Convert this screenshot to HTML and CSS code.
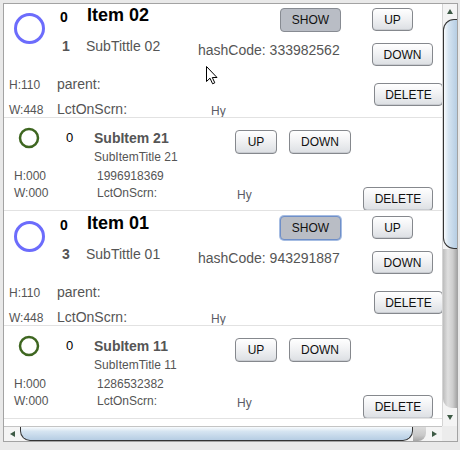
FILE: index.html
```html
<!DOCTYPE html>
<html>
<head>
<meta charset="utf-8">
<link rel="stylesheet" href="styles.css">
</head>
<body>
<div class="pane">
  <div class="viewport">
    <div class="list">
      <div class="item">
        <div class="item-top">
          <div class="ring-lg"></div>
          <div class="nums"><div class="n-top">0</div><div class="n-bot">1</div></div>
          <div class="titles"><div class="title">Item 02</div><div class="subtitle">SubTittle 02</div></div>
          <div class="hash">hashCode: 333982562</div>
          <div class="show-col"><button class="btn show">SHOW</button></div>
          <div class="nav-col"><button class="btn up">UP</button><button class="btn down">DOWN</button></div>
        </div>
        <div class="item-bottom">
          <div class="lbl r1">H:110</div><div class="info r1">parent:</div>
          <div class="lbl r2">W:448</div><div class="info r2">LctOnScrn:</div><div class="hy">Hy</div>
          <button class="btn del">DELETE</button>
        </div>
      </div>
      <div class="sub">
        <svg class="ring-sm" width="22" height="22" viewBox="0 0 22 22"><circle cx="11" cy="11" r="9" fill="none" stroke="#3e6620" stroke-width="2.5"/></svg>
        <div class="s-num">0</div>
        <div class="s-titles"><div class="s-title">SubItem 21</div><div class="s-subtitle">SubItemTitle 21</div></div>
        <button class="btn s-up">UP</button>
        <button class="btn s-down">DOWN</button>
        <div class="s-lbls"><div>H:000</div><div>W:000</div></div>
        <div class="s-info"><div>1996918369</div><div>LctOnScrn:</div></div>
        <div class="s-hy">Hy</div>
        <button class="btn s-del">DELETE</button>
      </div>
      <div class="item">
        <div class="item-top">
          <div class="ring-lg"></div>
          <div class="nums"><div class="n-top">0</div><div class="n-bot">3</div></div>
          <div class="titles"><div class="title">Item 01</div><div class="subtitle">SubTittle 01</div></div>
          <div class="hash">hashCode: 943291887</div>
          <div class="show-col"><button class="btn show focus">SHOW</button></div>
          <div class="nav-col"><button class="btn up">UP</button><button class="btn down">DOWN</button></div>
        </div>
        <div class="item-bottom">
          <div class="lbl r1">H:110</div><div class="info r1">parent:</div>
          <div class="lbl r2">W:448</div><div class="info r2">LctOnScrn:</div><div class="hy">Hy</div>
          <button class="btn del">DELETE</button>
        </div>
      </div>
      <div class="sub">
        <svg class="ring-sm" width="22" height="22" viewBox="0 0 22 22"><circle cx="11" cy="11" r="9" fill="none" stroke="#3e6620" stroke-width="2.5"/></svg>
        <div class="s-num">0</div>
        <div class="s-titles"><div class="s-title">SubItem 11</div><div class="s-subtitle">SubItemTitle 11</div></div>
        <button class="btn s-up">UP</button>
        <button class="btn s-down">DOWN</button>
        <div class="s-lbls"><div>H:000</div><div>W:000</div></div>
        <div class="s-info"><div>1286532382</div><div>LctOnScrn:</div></div>
        <div class="s-hy">Hy</div>
        <button class="btn s-del">DELETE</button>
      </div>
    </div>
  </div>
  <div class="vbar">
    <div class="arr arr-v"><span class="tri-up"></span></div>
    <div class="vthumb"></div>
    <div class="vtrack"></div>
    <div class="arr arr-vd"><span class="tri-down"></span></div>
  </div>
  <div class="hbar">
    <div class="arr arr-h"><span class="tri-left"></span></div>
    <div class="hthumb"></div>
    <div class="htrack"></div>
    <div class="arr arr-h"><span class="tri-right"></span></div>
  </div>
  <div class="corner"></div>
</div>
<svg class="cursor" width="13" height="19" viewBox="0 0 13 19"><path d="M0.5 0.5 L0.5 15.5 L4 12.2 L6.6 17.8 L8.8 16.8 L6.3 11.5 L11 11.5 Z" fill="#fff" stroke="#000" stroke-width="1" stroke-linejoin="miter"/></svg>
</body>
</html>
```
FILE: styles.css
```css
html, body {
  margin: 0;
  padding: 0;
  background: #e9e9e9;
  font-family: "Liberation Sans", Arial, sans-serif;
}
body {
  width: 460px;
  height: 450px;
  position: relative;
  overflow: hidden;
}
.pane {
  margin: 3px 0 0 3px;
  width: 455px;
  height: 439px;
  box-sizing: border-box;
  border: 1px solid #a3a3a3;
  display: grid;
  grid-template-columns: 438px 15px;
  grid-template-rows: 422px 15px;
}
.viewport {
  overflow: hidden;
  background: #fff;
}
.list {
  margin-top: -1px;
  width: 438px;
}

/* main item */
.item {
  height: 114px;
  border-bottom: 1px solid #e2e2e2;
  overflow: hidden;
  display: flex;
  flex-direction: column;
}
.item-top {
  height: 70px;
  display: flex;
}
.ring-lg {
  box-sizing: border-box;
  margin: 10px 0 0 10px;
  width: 31px;
  height: 31px;
  border: 3px solid #6c6cfc;
  border-radius: 50%;
}
.nums {
  margin-left: 15px;
  width: 26px;
  font-weight: bold;
  font-size: 14px;
  line-height: 16px;
}
.n-top { margin-top: 5.5px; color: #000; }
.n-bot { margin-top: 13px; padding-left: 2px; color: #555; }
.titles {
  width: 112px;
}
.title {
  margin-top: 2px;
  padding-left: 1px;
  font-weight: bold;
  font-size: 18px;
  line-height: 20px;
  color: #000;
}
.subtitle {
  margin-top: 13px;
  font-size: 14px;
  line-height: 16px;
  color: #555;
}
.hash {
  width: 82px;
  margin-top: 39px;
  white-space: nowrap;
  font-size: 14px;
  line-height: 16px;
  color: #555;
}
.show-col { width: 92px; }
.nav-col {
  display: flex;
  flex-direction: column;
  align-items: flex-start;
}

.btn {
  box-sizing: border-box;
  height: 23px;
  padding: 0;
  margin: 0;
  border: 1px solid #85888d;
  border-radius: 4px;
  background: linear-gradient(#ffffff, #f1f2f4 45%, #dcdfe3);
  box-shadow: inset 0 -1px 0 #c9ccd1;
  font-family: "Liberation Sans", Arial, sans-serif;
  font-size: 12px;
  color: #111;
  display: flex;
  align-items: center;
  justify-content: center;
}
.show {
  margin-top: 5px;
  width: 61px;
  height: 24px;
  background: #b9bdc5;
  border-color: #878b92;
  box-shadow: none;
}
.show.focus {
  border-color: #6f8fc8;
  box-shadow: 0 0 0 1px #a6bde3;
}
.up { margin-top: 5px; width: 41px; }
.down { margin-top: 12px; width: 61px; }

.item-bottom {
  height: 44px;
  box-sizing: border-box;
  padding: 3px 0 0 5px;
  display: grid;
  grid-template-columns: 48px 153px 164px auto;
  grid-template-rows: 16px 16px;
  row-gap: 9px;
  align-items: baseline;
  color: #555;
}
.r1 { grid-row: 1; }
.r2 { grid-row: 2; }
.lbl { grid-column: 1; font-size: 12px; line-height: 16px; }
.info { grid-column: 2; font-size: 14px; line-height: 16px; white-space: nowrap; }
.hy {
  grid-column: 3;
  grid-row: 2;
  align-self: start;
  margin-top: 2px;
  padding-left: 1px;
  font-size: 12px;
  line-height: 16px;
  color: #5c5c66;
}
.del {
  grid-column: 4;
  grid-row: 1 / span 2;
  align-self: start;
  margin-top: 7px;
  width: 69px;
}

/* sub item */
.sub {
  height: 92px;
  border-bottom: 1px solid #e2e2e2;
  overflow: hidden;
  box-sizing: content-box;
  padding-left: 10px;
  display: grid;
  grid-template-columns: 52px 28px 141px 54px 74px auto;
  grid-template-rows: 44px 48px;
  align-items: start;
  color: #555;
}
.ring-sm {
  display: block;
  margin: 9px 0 0 4px;
}
.s-num {
  margin-top: 12px;
  font-size: 13px;
  line-height: 15px;
  color: #000;
}
.s-title {
  margin-top: 12px;
  font-weight: bold;
  font-size: 14px;
  line-height: 16px;
}
.s-subtitle {
  margin-top: 4px;
  font-size: 12px;
  line-height: 14px;
}
.s-up { margin-top: 12px; width: 42px; height: 24px; }
.s-down { margin-top: 12px; width: 62px; height: 24px; }
.s-lbls, .s-info {
  grid-row: 2;
  margin-top: 5.5px;
  font-size: 12px;
  line-height: 17.5px;
  white-space: nowrap;
}
.s-lbls { grid-column: 1; }
.s-info { grid-column: 3; padding-left: 3px; }
.s-hy {
  grid-row: 2;
  grid-column: 4;
  margin-top: 25px;
  padding-left: 2px;
  font-size: 12px;
  line-height: 16px;
  color: #5c5c66;
}
.s-del {
  grid-row: 2;
  grid-column: 6;
  margin-top: 25px;
  width: 70px;
  height: 24px;
}

/* scrollbars */
.vbar {
  display: flex;
  flex-direction: column;
  background: #f4f4f4;
  border-left: 1px solid #d4d4d4;
}
.arr {
  display: flex;
  align-items: center;
  justify-content: center;
}
.arr-v { height: 15px; }
.arr-vd { height: 18px; }
.vthumb {
  height: 230px;
  box-sizing: border-box;
  border: 1px solid #343434;
  border-right: none;
  border-radius: 11px 0 0 11px;
  background: linear-gradient(to right, #f8fbfd, #d5e4f1 35%, #b6cde3);
}
.vtrack {
  flex: 1;
  border-radius: 0 0 0 9px;
  background: linear-gradient(to right, #bdbdbd, #dfdfdf 35%, #cdcdcd 70%, #a6a6a6);
}
.hbar {
  display: flex;
  background: #f4f4f4;
  border-top: 1px solid #c4c4c4;
}
.arr-h { width: 16px; }
.hthumb {
  width: 393px;
  box-sizing: border-box;
  border: 1px solid #343434;
  border-top: none;
  border-radius: 0 0 10px 10px;
  background: linear-gradient(to bottom, #f8fbfd, #d5e4f1 35%, #b6cde3);
}
.htrack {
  flex: 1;
  border-radius: 0 0 8px 0;
  background: linear-gradient(to bottom, #dcdcdc, #c8c8c8 60%, #a6a6a6);
}
.corner {
  background: #ececec;
}
.tri-up, .tri-down, .tri-left, .tri-right {
  width: 0;
  height: 0;
  display: block;
}
.tri-up {
  border-left: 3px solid transparent;
  border-right: 3px solid transparent;
  border-bottom: 5px solid #3d5a45;
}
.tri-down {
  border-left: 3px solid transparent;
  border-right: 3px solid transparent;
  border-top: 5px solid #3d5a45;
}
.tri-left {
  border-top: 3px solid transparent;
  border-bottom: 3px solid transparent;
  border-right: 5px solid #3d5a45;
}
.tri-right {
  border-top: 3px solid transparent;
  border-bottom: 3px solid transparent;
  border-left: 5px solid #3d5a45;
}

.cursor {
  position: absolute;
  left: 206px;
  top: 66px;
}
```
